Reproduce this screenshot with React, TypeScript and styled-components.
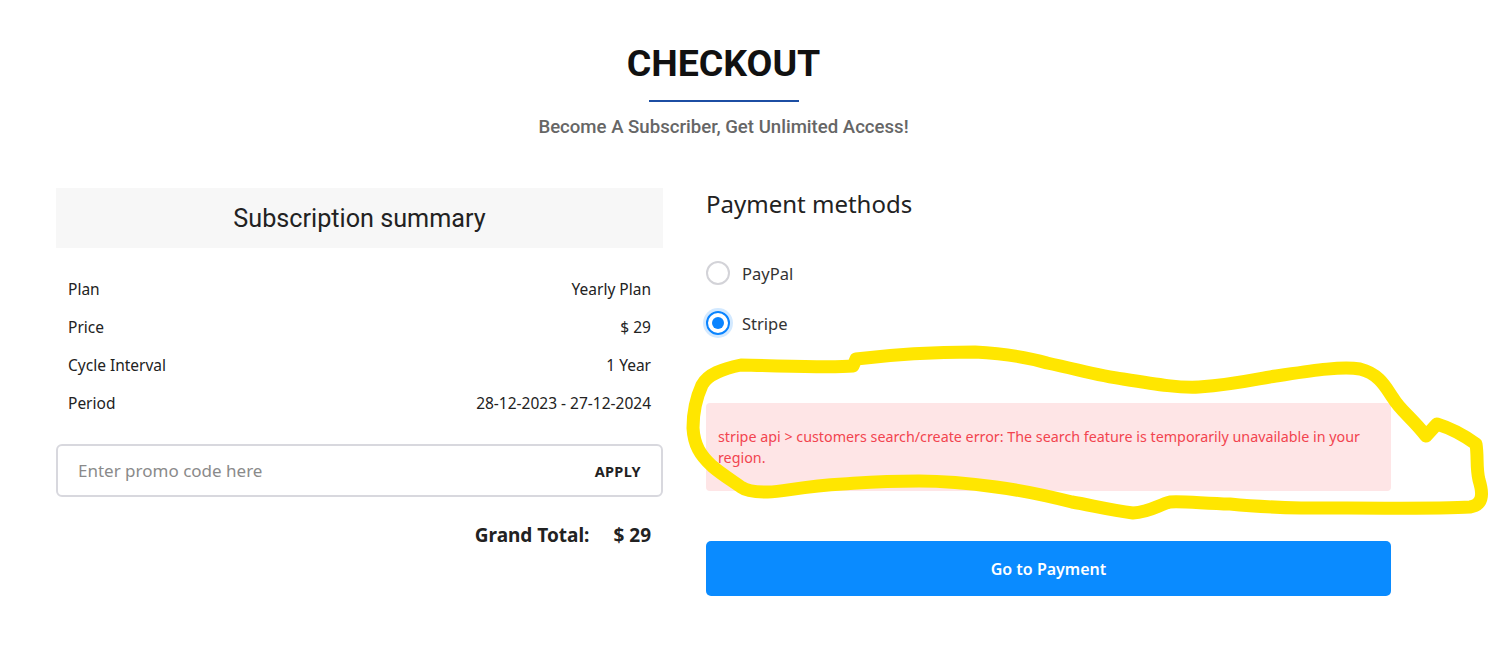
import React, { useState } from 'react';
import styled, { createGlobalStyle } from 'styled-components';

const GlobalStyle = createGlobalStyle`
  * {
    box-sizing: border-box;
  }
  body {
    margin: 0;
    background: #fff;
    font-family: 'Noto Sans', 'Open Sans', sans-serif;
    color: #212529;
  }
`;

const Page = styled.div`
  position: relative;
  width: 1489px;
  min-height: 656px;
  padding: 39px 98px 40px 56px;
`;

const Header = styled.header`
  display: flex;
  flex-direction: column;
  align-items: center;
`;

const Title = styled.h1`
  margin: 0;
  font-family: Roboto, sans-serif;
  font-weight: 700;
  font-size: 37.5px;
  line-height: 48px;
  color: #111;
`;

const TitleRule = styled.span`
  display: block;
  width: 150px;
  height: 2px;
  margin-top: 13px;
  background: #1c4ea3;
`;

const Subtitle = styled.p`
  margin: 13px 0 0;
  font-family: Roboto, sans-serif;
  font-weight: 500;
  font-size: 18.6px;
  line-height: 24px;
  color: #666;
`;

const Columns = styled.div`
  display: grid;
  grid-template-columns: 607px 685px;
  column-gap: 43px;
  margin-top: 49px;
`;

const Column = styled.section`
  display: flex;
  flex-direction: column;
`;

const SummaryHead = styled.div`
  height: 60px;
  display: flex;
  align-items: center;
  justify-content: center;
  background: #f7f7f7;
  font-family: Roboto, sans-serif;
  font-size: 25.2px;
  color: #222;
`;

const SummaryList = styled.dl`
  margin: 22px 0 0;
  padding: 0 12px;
`;

const SummaryRow = styled.div`
  height: 38px;
  display: flex;
  align-items: center;
  justify-content: space-between;
  font-size: 15.5px;
  color: #222;

  dt,
  dd {
    margin: 0;
  }
`;

const PromoBox = styled.div`
  margin-top: 22px;
  height: 53px;
  display: flex;
  align-items: center;
  padding: 0 20px;
  border: 2px solid #d8d8de;
  border-radius: 6px;
`;

const PromoInput = styled.input`
  flex: 1;
  border: none;
  outline: none;
  padding: 0;
  font-family: inherit;
  font-size: 17px;
  color: #222;
  background: transparent;

  &::placeholder {
    color: #8a8a8a;
  }
`;

const ApplyButton = styled.button`
  border: none;
  background: none;
  padding: 0;
  font-family: inherit;
  font-weight: 700;
  font-size: 14.5px;
  letter-spacing: 0.3px;
  color: #222;
  cursor: pointer;
`;

const TotalLine = styled.div`
  margin-top: 26px;
  padding: 0 12px;
  display: flex;
  justify-content: flex-end;
  gap: 24px;
  font-weight: 700;
  font-size: 19px;
  line-height: 24px;
  color: #222;
`;

const SectionTitle = styled.h2`
  margin: 0;
  font-weight: 400;
  font-size: 24px;
  line-height: 32px;
  color: #222;
`;

const MethodList = styled.div`
  margin-top: 41px;
  display: flex;
  flex-direction: column;
  gap: 26px;
`;

const MethodOption = styled.label`
  display: flex;
  align-items: center;
  gap: 12px;
  height: 24px;
  font-size: 16.5px;
  color: #333;
  cursor: pointer;
`;

const RadioDot = styled.span<{ $checked: boolean }>`
  width: 24px;
  height: 24px;
  border-radius: 50%;
  border: 2px solid ${({ $checked }) => ($checked ? '#0a84ff' : '#d3d3d8')};
  box-shadow: ${({ $checked }) =>
    $checked ? '0 0 0 3px rgba(10, 132, 255, 0.18)' : 'none'};
  display: flex;
  align-items: center;
  justify-content: center;

  &::after {
    content: '';
    width: 12px;
    height: 12px;
    border-radius: 50%;
    background: ${({ $checked }) => ($checked ? '#0a84ff' : 'transparent')};
  }
`;

const ErrorNote = styled.div`
  margin-top: 68px;
  padding: 23px 12px;
  border-radius: 4px;
  background: #fee5e6;
  color: #f2444f;
  font-size: 14.3px;
  line-height: 21px;
`;

const PayButton = styled.button`
  margin-top: 50px;
  height: 55px;
  border: none;
  border-radius: 5px;
  background: #0a8bff;
  color: #fff;
  font-family: inherit;
  font-weight: 600;
  font-size: 16px;
  cursor: pointer;
`;

const Scribble = styled.svg`
  position: absolute;
  top: 0;
  left: 0;
  pointer-events: none;
`;

const summary = [
  ['Plan', 'Yearly Plan'],
  ['Price', '$ 29'],
  ['Cycle Interval', '1 Year'],
  ['Period', '28-12-2023 - 27-12-2024'],
];

const methods = ['PayPal', 'Stripe'];

// hand-drawn marker loop around the payment error
const loop =
  'M741 365 C790 366 830 368 853 366 L856 359 C880 356 920 352 975 352 ' +
  'C1010 354 1030 358 1047 363 C1080 370 1100 376 1123 379 C1160 385 1180 388 1199 387 ' +
  'C1240 384 1260 378 1276 376 C1310 371 1340 366 1360 369 C1380 374 1386 388 1393 398 ' +
  'C1400 410 1412 418 1426 436 L1437 424 C1450 428 1465 436 1476 444 C1478 456 1476 468 1479 480 ' +
  'C1484 496 1482 505 1470 507 C1440 509 1360 508 1301 508 C1260 507 1240 505 1230 504 ' +
  'C1200 503 1180 501 1170 502 C1158 505 1150 512 1133 513 C1110 510 1090 505 1072 502 ' +
  'C1040 494 1020 490 996 487 C960 482 940 481 919 481 C880 481 860 483 843 484 ' +
  'C800 486 780 493 766 492 C752 492 745 490 741 487 C728 478 720 473 712 466 ' +
  'C700 455 694 445 693 428 C693 410 697 396 702 385 C708 374 722 369 741 365 Z';

export default function App() {
  const [method, setMethod] = useState('Stripe');

  return (
    <Page>
      <GlobalStyle />
      <Header>
        <Title>CHECKOUT</Title>
        <TitleRule />
        <Subtitle>Become A Subscriber, Get Unlimited Access!</Subtitle>
      </Header>

      <Columns>
        <Column>
          <SummaryHead>Subscription summary</SummaryHead>
          <SummaryList>
            {summary.map(([label, value]) => (
              <SummaryRow key={label}>
                <dt>{label}</dt>
                <dd>{value}</dd>
              </SummaryRow>
            ))}
          </SummaryList>
          <PromoBox>
            <PromoInput placeholder="Enter promo code here" />
            <ApplyButton>APPLY</ApplyButton>
          </PromoBox>
          <TotalLine>
            <span>Grand Total:</span>
            <span>$ 29</span>
          </TotalLine>
        </Column>

        <Column>
          <SectionTitle>Payment methods</SectionTitle>
          <MethodList>
            {methods.map((name) => (
              <MethodOption key={name} onClick={() => setMethod(name)}>
                <RadioDot $checked={method === name} />
                {name}
              </MethodOption>
            ))}
          </MethodList>
          <ErrorNote>
            stripe api &gt; customers search/create error: The search feature is temporarily
            unavailable in your region.
          </ErrorNote>
          <PayButton>Go to Payment</PayButton>
        </Column>
      </Columns>

      <Scribble width="1489" height="656" viewBox="0 0 1489 656">
        <path
          d={loop}
          fill="none"
          stroke="#ffe600"
          strokeWidth="13"
          strokeLinejoin="round"
          strokeLinecap="round"
        />
      </Scribble>
    </Page>
  );
}
